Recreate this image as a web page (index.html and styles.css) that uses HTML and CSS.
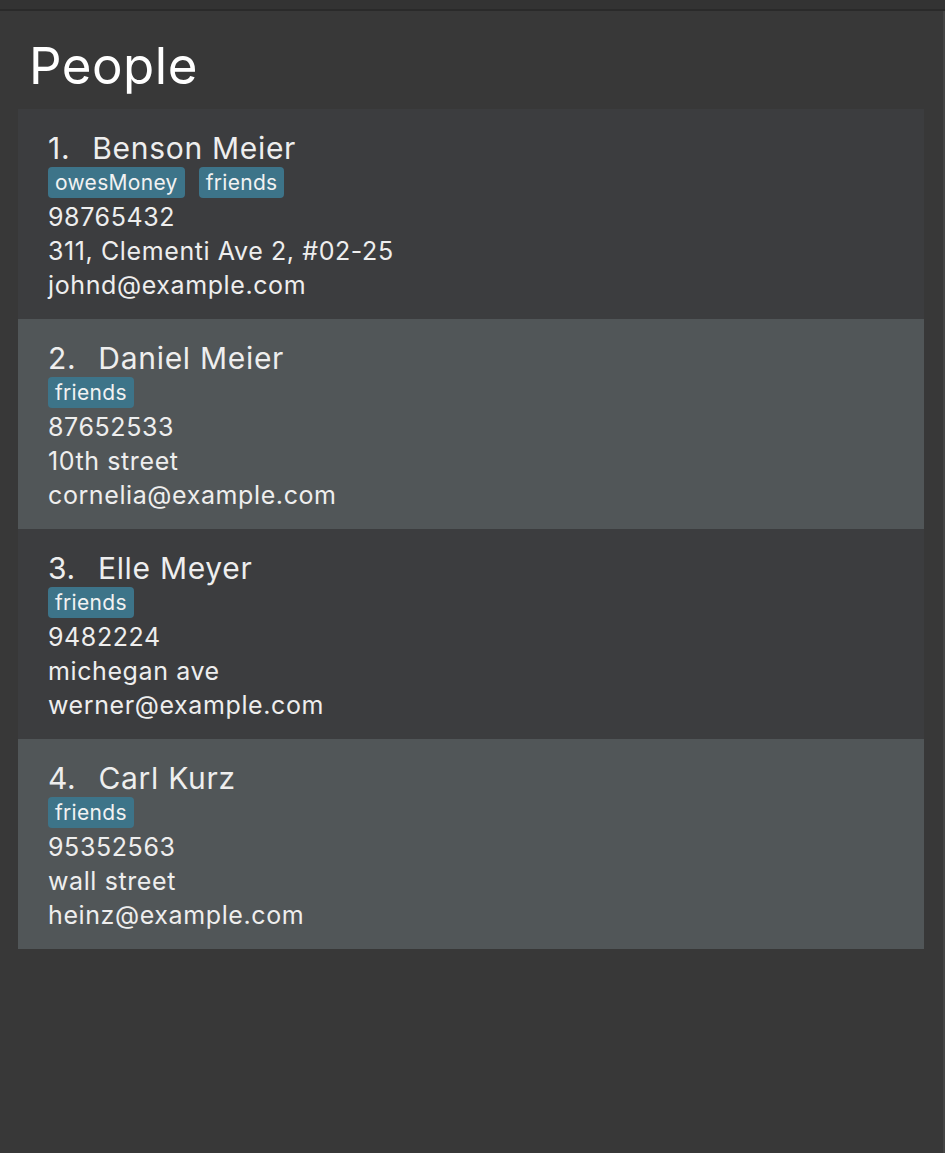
FILE: index.html
```html
<!DOCTYPE html>
<html>
<head>
<meta charset="utf-8">
<link rel="stylesheet" href="styles.css">
</head>
<body>
<div class="topbar"></div>
<main class="panel">
  <h1 class="title">People</h1>
  <ul class="list">
    <li class="card dark">
      <div class="name"><span class="idx">1.</span><span>Benson Meier</span></div>
      <div class="tags"><span class="tag">owesMoney</span><span class="tag">friends</span></div>
      <div class="line">98765432</div>
      <div class="line">311, Clementi Ave 2, #02-25</div>
      <div class="line">johnd@example.com</div>
    </li>
    <li class="card light">
      <div class="name"><span class="idx">2.</span><span>Daniel Meier</span></div>
      <div class="tags"><span class="tag">friends</span></div>
      <div class="line">87652533</div>
      <div class="line">10th street</div>
      <div class="line">cornelia@example.com</div>
    </li>
    <li class="card dark">
      <div class="name"><span class="idx">3.</span><span>Elle Meyer</span></div>
      <div class="tags"><span class="tag">friends</span></div>
      <div class="line">9482224</div>
      <div class="line">michegan ave</div>
      <div class="line">werner@example.com</div>
    </li>
    <li class="card light">
      <div class="name"><span class="idx">4.</span><span>Carl Kurz</span></div>
      <div class="tags"><span class="tag">friends</span></div>
      <div class="line">95352563</div>
      <div class="line">wall street</div>
      <div class="line">heinz@example.com</div>
    </li>
  </ul>
</main>
</body>
</html>
```
FILE: styles.css
```css
html, body {
  margin: 0;
  padding: 0;
}
body {
  background: #383838;
  font-family: Inter, "Open Sans", sans-serif;
  color: #eeeeee;
  display: flex;
  flex-direction: column;
  height: 1153px;
  overflow: hidden;
}
.topbar {
  height: 9px;
  background: #333333;
  border-bottom: 2px solid #2a2a2a;
  flex: none;
}
.panel {
  flex: 1;
  border-right: 2px solid #444444;
  padding: 0 19px 0 18px;
}
.title {
  margin: 0;
  padding: 29px 0 0 11px;
  height: 98px;
  box-sizing: border-box;
  font-size: 51px;
  font-weight: 400;
  color: #ffffff;
  line-height: 51px;
  letter-spacing: 0.5px;
}
.list {
  list-style: none;
  margin: 0;
  padding: 0;
  display: flex;
  flex-direction: column;
}
.card {
  height: 210px;
  box-sizing: border-box;
  padding: 20px 30px 0;
}
.card.dark { background: #3c3d3f; }
.card.light { background: #515658; }
.name {
  font-size: 30px;
  line-height: 38px;
  letter-spacing: 0.7px;
  display: flex;
  gap: 22px;
}
.tags {
  display: flex;
  gap: 14px;
  margin: 0 0 2px;
}
.tag {
  background: #3d7489;
  color: #f2f2f2;
  font-size: 21px;
  line-height: 31px;
  padding: 0 7px;
  border-radius: 4px;
  letter-spacing: 0.3px;
}
.line {
  font-size: 25px;
  line-height: 34px;
  letter-spacing: 0.6px;
}
```
